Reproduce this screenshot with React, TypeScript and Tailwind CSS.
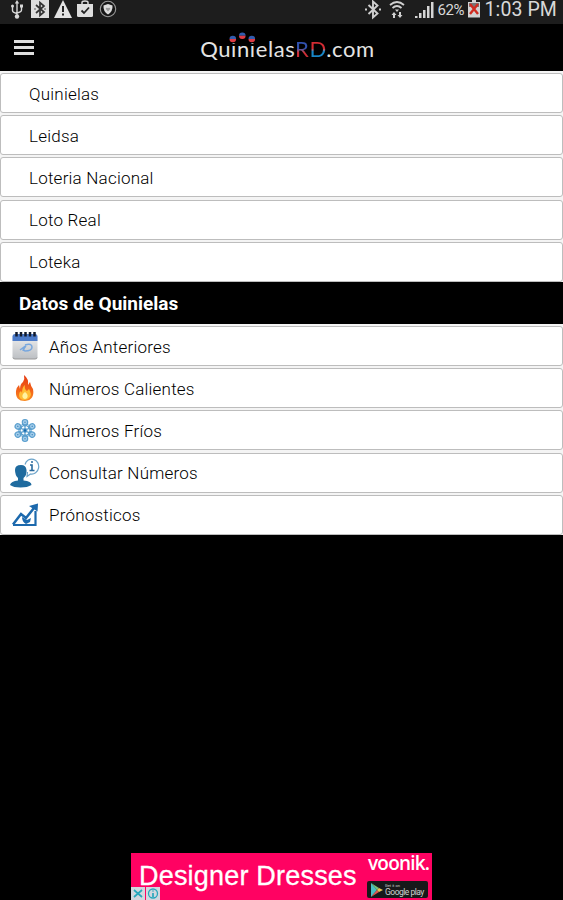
import type { ReactNode } from 'react';

const lotteries = ['Quinielas', 'Leidsa', 'Loteria Nacional', 'Loto Real', 'Loteka'];

function UsbIcon() {
  return (
    <svg width="14" height="20" viewBox="0 0 14 20" fill="none" stroke="#d8d8d8" strokeWidth="1.4">
      <path d="M7 2v14M2.5 6v4.5q0 2 4.5 3M11.5 6v4q0 2-4.500 3" />
      <path d="M7 0 4.800 3.500h4.400z" fill="#d8d8d8" stroke="none" />
      <circle cx="2.500" cy="6" r="1.500" fill="#d8d8d8" stroke="none" />
      <path d="M10 4.500h3v3h-3z" fill="#d8d8d8" stroke="none" />
      <circle cx="7" cy="16.500" r="2.200" fill="#d8d8d8" stroke="none" />
    </svg>
  );
}

function BluetoothBoxIcon() {
  return (
    <svg width="18" height="18" viewBox="0 0 18 18">
      <path d="M0 0h18v18H0z" fill="#dedede" />
      <path d="m5 5 8 7-4 3.500v-13L13 6l-8 7M3.500 9h1M13.500 9h1" fill="none" stroke="#333" strokeWidth="1.700" />
    </svg>
  );
}

function WarningIcon() {
  return (
    <svg width="18" height="18" viewBox="0 0 18 18">
      <path d="m9 0 9 18H0z" fill="#e2e2e2" />
      <path d="M9 6v6M9 13.500v2" stroke="#222" strokeWidth="2" />
    </svg>
  );
}

function BagCheckIcon() {
  return (
    <svg width="16" height="18" viewBox="0 0 16 18">
      <path d="M5 5V2.500Q5 1 8 1t3 1.500V5" fill="none" stroke="#d8d8d8" strokeWidth="1.500" />
      <path d="M0 4h16v11.500q0 1.500-1.500 1.500h-13Q0 17 0 15.500z" fill="#dedede" />
      <path d="m4.500 10.500 2.500 2.500 5-5.500" fill="none" stroke="#222" strokeWidth="1.800" />
    </svg>
  );
}

function ShieldIcon() {
  return (
    <svg width="18" height="18" viewBox="0 0 18 18">
      <circle cx="9" cy="9" r="7.700" fill="#161616" stroke="#999" strokeWidth="1.100" />
      <path d="M4.500 5.500 9 4l4.500 1.500q.5 6-4.500 9-5-3-4.500-9z" fill="#dcdcdc" />
      <path d="M9 11.500 6.800 9q-.3-2 2.200-1 2.500-1 2.200 1z" fill="#999" />
    </svg>
  );
}

function StatusBar() {
  return (
    <div className="h-6 shrink-0 bg-[#1d1d1d] flex justify-between text-[#d8d8d8]">
      <div className="flex items-start pl-2.5">
        <UsbIcon />
        <span className="w-[7px]" />
        <BluetoothBoxIcon />
        <span className="w-[5px]" />
        <WarningIcon />
        <span className="w-[5px]" />
        <BagCheckIcon />
        <span className="w-[6px]" />
        <ShieldIcon />
      </div>
      <div className="flex items-start pr-[6px]">
        <svg width="18" height="20" viewBox="0 0 18 20" className="mr-[7px]">
          <path d="m4.500 5 9 8.500-4.500 4v-16l4.500 4-9 8.500M1 9.500h2M15 9.500h2" fill="none" stroke="#cfcfcf" strokeWidth="1.900" />
        </svg>
        <svg width="16" height="20" viewBox="0 0 16 20" className="mr-[9px]">
          <path d="M1 5q7-6 14 0M3.500 8q4.500-4 9 0" fill="none" stroke="#d0d0d0" strokeWidth="1.800" />
          <path d="M6 9.500h4L8 12zM5 12l2.500 3H6v3H4v-3H2.500zM11 18l-2.500-3H10v-3h2v3h1.500z" fill="#d0d0d0" />
        </svg>
        <svg width="20" height="20" viewBox="0 0 20 20" className="mr-[4px]">
          <path d="M1 16h2.500v2H1zM5 13h2.500v5H5zM9 10h2.500v8H9zM13 6h2.500v12H13zM17 2h2.500v16H17z" fill="#d5d5d5" />
        </svg>
        <span className="w-[30px] text-[15px] leading-[20px] tracking-[-0.4px]">62%</span>
        <svg width="12" height="18" viewBox="0 0 12 18" className="mr-[5px]">
          <path d="M4 0h4v2h4v15.500H0V2h4z" fill="#d2d2d2" />
          <path d="M1 3h10v4H1z" fill="#777" />
          <path d="m2 4 8 10M10 4 2 14" stroke="#d02b20" strokeWidth="2.400" />
        </svg>
        <span className="h-6 text-[19.5px] leading-[20px] tracking-[0.1px] whitespace-nowrap">1:03 PM</span>
      </div>
    </div>
  );
}

function Logo() {
  return (
    <div className="relative font-[Lato,sans-serif] text-[22px] leading-[28px] text-[#e4e4e4] whitespace-nowrap tracking-[0.6px]">
      Quinielas
      <span className="bg-linear-to-b from-[#3151ae] from-50% to-[#cf2d36] to-65% bg-clip-text text-transparent">R</span>
      <span className="bg-linear-to-b from-[#d42b32] from-50% to-[#1786c8] to-60% bg-clip-text text-transparent">D</span>
      .com
      {/* Two-tone dots above the name */}
      <svg width="34" height="12" viewBox="0 0 34 12" className="absolute left-[28px] -top-[3px]">
        <path d="M0 6h10v5H0zM19 6h10v5H19z" fill="#000" />
        <path d="M1.500 7a3.300 3.300 0 0 1 6.600 0zM11 3.800a3.300 3.300 0 0 1 6.600 0zM20.500 7a3.300 3.300 0 0 1 6.600 0z" fill="#315cad" />
        <path d="M1.500 7a3.300 3.300 0 0 0 6.600 0zM11 3.800a3.300 3.300 0 0 0 6.600 0zM20.500 7a3.300 3.300 0 0 0 6.600 0z" fill="#de3b43" />
      </svg>
    </div>
  );
}

function CalendarIcon() {
  return (
    <svg width="28" height="30" viewBox="0 0 28 30">
      <defs>
        <linearGradient id="page" x2="0" y2="1">
          <stop stopColor="#f1f1f1" />
          <stop offset="1" stopColor="#bcbfc3" />
        </linearGradient>
      </defs>
      <rect x="1.500" y="3" width="25" height="25" rx="2" fill="url(#page)" />
      <path d="M2 26.500q0 1.500 2 1.500h20q2 0 2-1.500" fill="none" stroke="#999" />
      <path d="M1.500 10V5Q2 3 4 3h20q2 0 2.500 2v5z" fill="#4c7bc9" />
      <path d="M5.500 1v4.500M10 1v4.500M14.500 1v4.500M19 1v4.500M23.500 1v4.500" stroke="#111a2c" strokeWidth="2.500" />
      <path d="m9 19 4-3-1 4M14 14q7-2 7 2t-7 4q-3-1 1-5" fill="none" stroke="#78a7de" strokeWidth="1.500" />
    </svg>
  );
}

function FlameIcon() {
  return (
    <svg width="20" height="28" viewBox="0 0 20 28">
      <defs>
        <linearGradient id="fire" x2="0" y2="1">
          <stop stopColor="#e53a12" />
          <stop offset=".6" stopColor="#f36419" />
          <stop offset="1" stopColor="#f98b20" />
        </linearGradient>
      </defs>
      <path d="M9 1q5 4 4 10l2-3q1 5 3 7 2 11-8 12Q0 27 1 17q0-3 3-6l1 4q0-5 3-7 2-3 1-7z" fill="url(#fire)" />
      <path d="M10 11q-1 4 2 6l2-2q3 5 1 8-2 3-5 3-6 0-6-5 0-3 2-4l1 2q0-6 3-8z" fill="#ffbd35" />
      <path d="M10 18q4 3 2 6-2 2-4 0-2-3 2-6z" fill="#fff3a0" />
    </svg>
  );
}

function SnowflakeIcon() {
  return (
    <svg width="24" height="25" viewBox="-12 -12.500 24 25" fill="none" stroke="#5b9fce" strokeWidth="1.200">
      {[0, 60, 120, 180, 240, 300].map((angle) => (
        <g key={angle} transform={`rotate(${angle})`}>
          <path d="M0 0v-10.500M-3-6.500 0-4l3-2.500" />
          <circle cy="-8.300" r="2.700" fill="#a5cdea" />
          <circle cy="-8.300" r=".7" fill="#3b86bd" stroke="none" />
        </g>
      ))}
      <circle r="5" />
      <circle r="1.800" fill="#1768ad" />
    </svg>
  );
}

function ConsultIcon() {
  return (
    <svg width="30" height="30" viewBox="0 0 30 30">
      <path d="M15 6.500a7 7.500 0 1 1 5.500 9.500l-3.500 2.500.5-4.500" fill="#fff" stroke="#6ba3c9" strokeWidth="1.200" />
      <path d="M20 7h2v5.500M19.500 12.500h5M21 4h2" fill="none" stroke="#28699d" strokeWidth="1.600" />
      <path d="M5 12q0-5 6-5 5 0 5.500 5 .5 5-3 8v2.500q8 .5 8 4.500-4 2.500-11 2.500T0 27q1-4 8-4.500V20q-3-3-3-8z" fill="#1f6b9f" />
    </svg>
  );
}

function ForecastIcon() {
  return (
    <svg width="28" height="26" viewBox="0 0 28 26" fill="none" stroke="#1c69ad">
      <path d="M2 22.500 10 12l5 4 8-10" strokeWidth="2.500" />
      <path d="m18 4 9-2.500-.5 8z" fill="#1c69ad" stroke="none" />
      <path d="M24.500 9v14H2" strokeWidth="2.200" />
      <path d="m11 15 5 3 4-2-1 4-4 2q-4-2-4-7z" fill="#1c69ad" stroke="none" />
    </svg>
  );
}

const tools: { label: string; icon: ReactNode }[] = [
  { label: 'Años Anteriores', icon: <CalendarIcon /> },
  { label: 'Números Calientes', icon: <FlameIcon /> },
  { label: 'Números Fríos', icon: <SnowflakeIcon /> },
  { label: 'Consultar Números', icon: <ConsultIcon /> },
  { label: 'Prónosticos', icon: <ForecastIcon /> },
];

function Row({ label, icon }: { label: string; icon?: ReactNode }) {
  return (
    <li className="h-10 shrink-0 bg-white border border-[#bdbdbd] rounded-[3px] flex items-center">
      {icon ? <span className="w-12 pr-px flex justify-center shrink-0">{icon}</span> : <span className="w-7" />}
      <span className="pt-px text-[17px] leading-5 tracking-[0.22px] font-light text-black">{label}</span>
    </li>
  );
}

function AdBanner() {
  return (
    <div className="relative w-[301px] h-[47px] bg-[#ff0262] mx-auto flex text-white">
      <span className="pl-2 pt-[6px] w-[236px] shrink-0 font-['Liberation_Sans',sans-serif] text-[27px] leading-[34px] tracking-[0.2px] whitespace-nowrap [-webkit-text-stroke:0.3px_white]">
        Designer Dresses
      </span>
      <div className="flex flex-col">
        <span className="h-[28px] pl-px font-['Open_Sans',sans-serif] text-[19px] leading-[20px] font-semibold tracking-[-0.8px]">voonik.</span>
        <div className="w-[61px] h-[17px] bg-[#17191a] rounded-[2px] flex items-center pl-1">
          <svg width="12" height="14" viewBox="0 0 12 14">
            <path d="M0 0v14l6-7z" fill="#48bfc2" />
            <path d="m0 0 8 5-2 2z" fill="#74c276" />
            <path d="m0 14 8-5-2-2z" fill="#e15650" />
            <path d="m8 5 4 2-4 2-2-2z" fill="#e8c654" />
          </svg>
          <div className="pl-[2px] flex flex-col text-[#d0d0d0]">
            <span className="text-[4px] leading-[5px]">Get it on</span>
            <span className="text-[8.5px] leading-[9px] tracking-[-0.5px] whitespace-nowrap">Google play</span>
          </div>
        </div>
      </div>
      <svg width="29" height="13" viewBox="0 0 29 13" className="absolute left-0 bottom-0">
        <path d="M0 0h14v13H0zM15 0h14v13H15z" fill="#d1d7df" />
        <path d="m3 3 8 7M11 3l-8 7" stroke="#27a7bc" strokeWidth="1.700" />
        <circle cx="22" cy="6.500" r="4.500" fill="none" stroke="#27a7bc" strokeWidth="1.300" />
        <path d="M22 3.500v1M22 6v4" stroke="#27a7bc" strokeWidth="1.700" />
      </svg>
    </div>
  );
}

export default function App() {
  return (
    <main className="w-full h-[900px] bg-black flex flex-col overflow-hidden font-[Roboto,sans-serif]">
      <StatusBar />
      <header className="h-[47px] shrink-0 grid grid-cols-[186px_1fr_174px] pt-[11px]">
        <button aria-label="Menu" className="w-5 ml-[14px] mt-[5px] flex flex-col gap-[3px] self-start">
          <span className="w-5 h-[3px] bg-[#dedede]" />
          <span className="w-5 h-[3px] bg-[#dedede]" />
          <span className="w-5 h-[3px] bg-[#dedede]" />
        </button>
        <div className="flex justify-center">
          <Logo />
        </div>
      </header>

      <ul className="h-[211px] shrink-0 bg-[#f4f4f4] pt-[2px] flex flex-col gap-[2.2px]">
        {lotteries.map((label) => (
          <Row key={label} label={label} />
        ))}
      </ul>

      <h2 className="h-[42px] shrink-0 pl-[19px] text-[19px] leading-[43px] font-bold text-white">Datos de Quinielas</h2>

      <ul className="h-[211px] shrink-0 bg-[#f4f4f4] pt-[2px] flex flex-col gap-[2.2px]">
        {tools.map((tool) => (
          <Row key={tool.label} {...tool} />
        ))}
      </ul>

      <footer className="mt-auto">
        <AdBanner />
      </footer>
    </main>
  );
}
